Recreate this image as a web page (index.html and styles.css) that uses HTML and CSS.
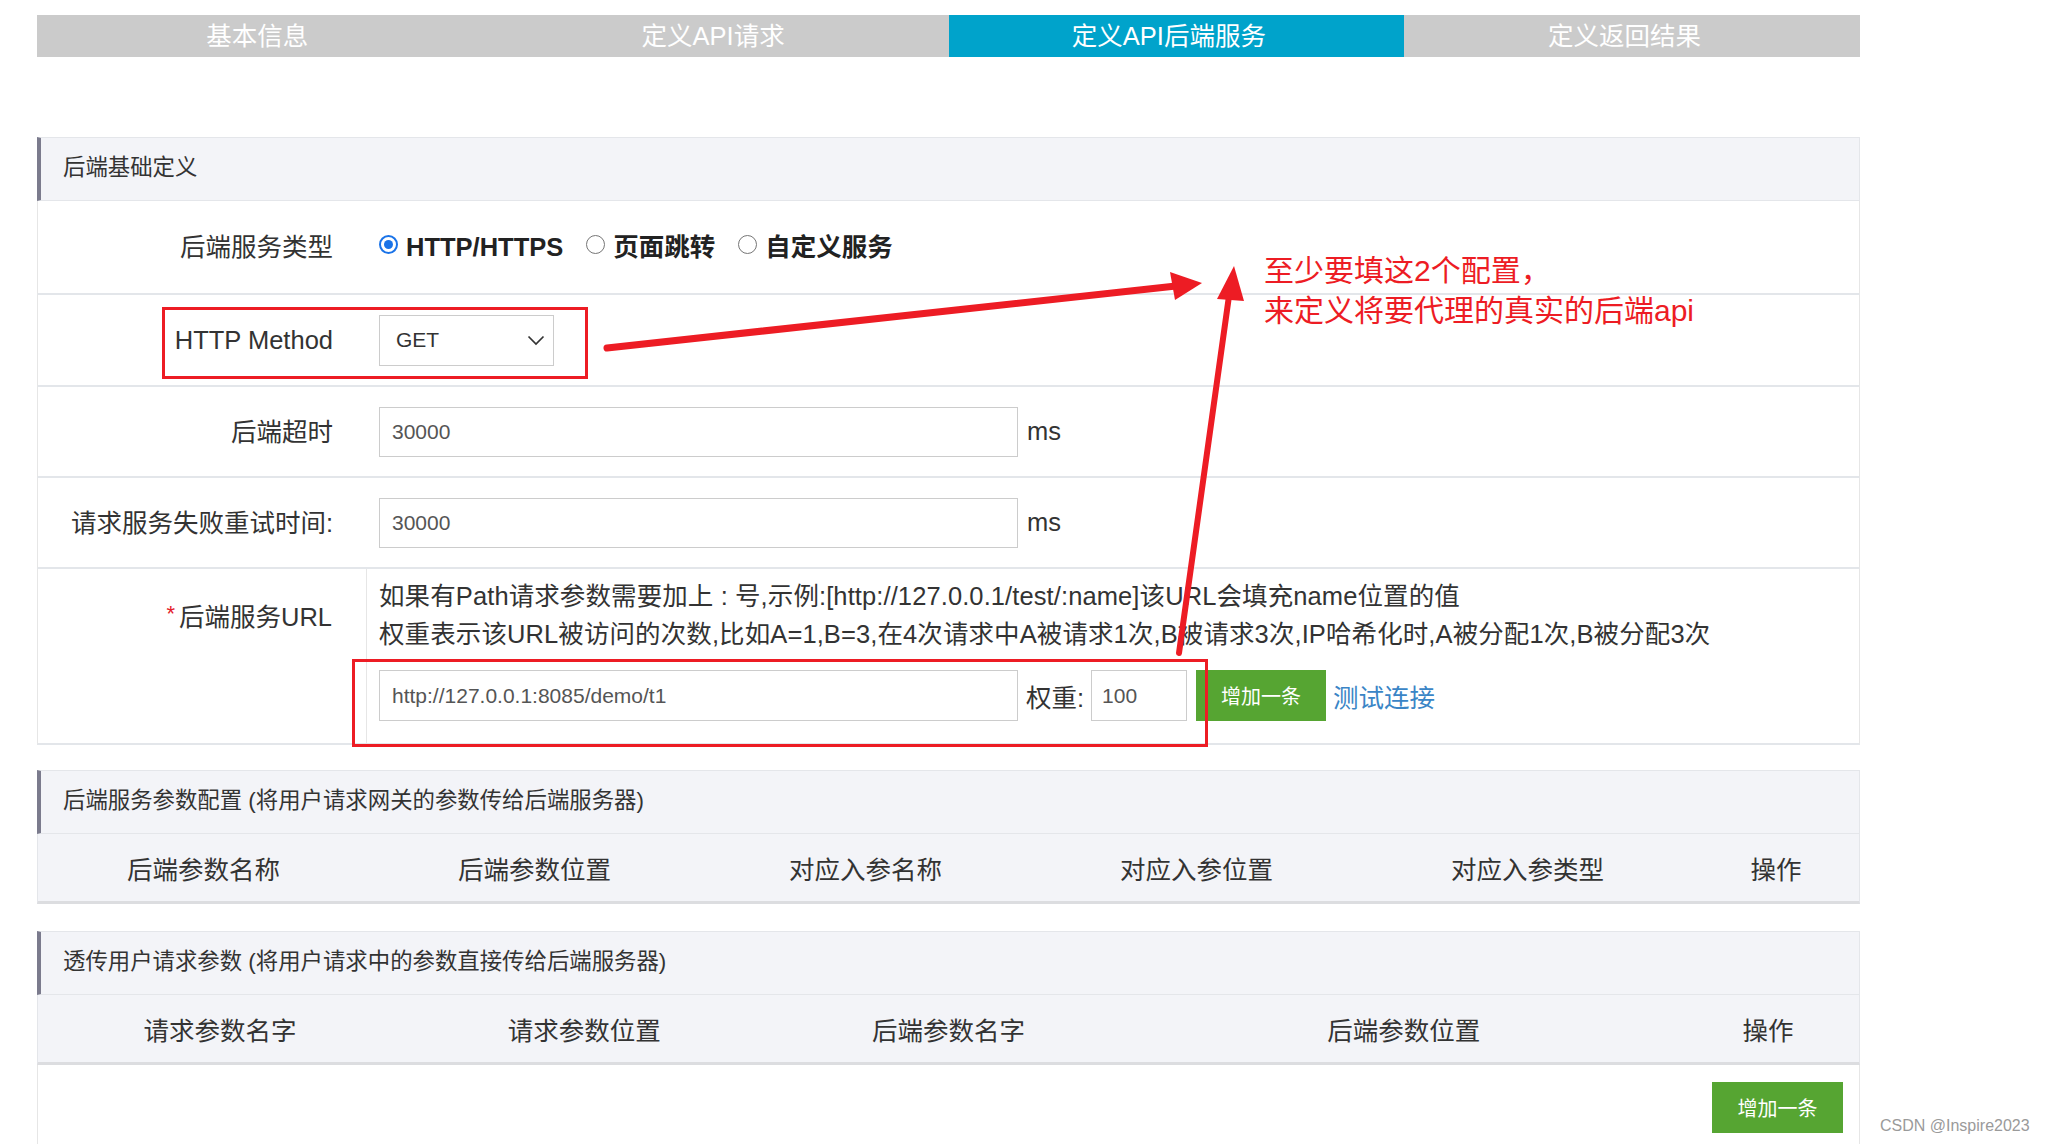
FILE: index.html
```html
<!DOCTYPE html>
<html lang="zh-CN">
<head>
<meta charset="utf-8">
<title>定义API后端服务</title>
<link rel="stylesheet" href="styles.css">
</head>
<body>
<div class="main">
  <div class="tabs">
    <div class="tab">基本信息</div>
    <div class="tab">定义API请求</div>
    <div class="tab active">定义API后端服务</div>
    <div class="tab">定义返回结果</div>
  </div>

  <section class="panel panel-basic">
    <div class="panel-title">后端基础定义</div>

    <div class="form-row row-type">
      <div class="form-label">后端服务类型</div>
      <div class="form-ctrl">
        <label class="radio checked"><span class="dot"></span><span class="radio-text">HTTP/HTTPS</span></label>
        <label class="radio"><span class="dot"></span><span class="radio-text">页面跳转</span></label>
        <label class="radio"><span class="dot"></span><span class="radio-text">自定义服务</span></label>
      </div>
    </div>

    <div class="form-row row-method">
      <div class="form-label">HTTP Method</div>
      <div class="form-ctrl">
        <div class="select">
          <span>GET</span>
          <svg class="chev" width="18" height="11" viewBox="0 0 18 11"><polyline points="1.5,1.5 9,9 16.5,1.5" fill="none" stroke="#333" stroke-width="1.7"/></svg>
        </div>
      </div>
    </div>

    <div class="form-row row-timeout">
      <div class="form-label">后端超时</div>
      <div class="form-ctrl">
        <input class="text-input" type="text" value="30000">
        <span class="unit">ms</span>
      </div>
    </div>

    <div class="form-row row-retry">
      <div class="form-label">请求服务失败重试时间:</div>
      <div class="form-ctrl">
        <input class="text-input" type="text" value="30000">
        <span class="unit">ms</span>
      </div>
    </div>

    <div class="form-row row-url">
      <div class="form-label label-top"><span class="req">*</span>后端服务URL</div>
      <div class="url-ctrl">
        <div class="help">如果有Path请求参数需要加上 : 号,示例:[http://127.0.0.1/test/:name]该URL会填充name位置的值</div>
        <div class="help">权重表示该URL被访问的次数,比如A=1,B=3,在4次请求中A被请求1次,B被请求3次,IP哈希化时,A被分配1次,B被分配3次</div>
        <div class="url-line">
          <input class="text-input url-input" type="text" value="http://127.0.0.1:8085/demo/t1">
          <span class="weight-label">权重:</span>
          <input class="text-input weight-input" type="text" value="100">
          <span class="btn-green">增加一条</span>
          <span class="link">测试连接</span>
        </div>
      </div>
    </div>
  </section>

  <section class="panel panel-params">
    <div class="panel-title">后端服务参数配置 (将用户请求网关的参数传给后端服务器)</div>
    <div class="thead cols-6">
      <div>后端参数名称</div>
      <div>后端参数位置</div>
      <div>对应入参名称</div>
      <div>对应入参位置</div>
      <div>对应入参类型</div>
      <div>操作</div>
    </div>
  </section>

  <section class="panel panel-pass">
    <div class="panel-title">透传用户请求参数 (将用户请求中的参数直接传给后端服务器)</div>
    <div class="thead cols-5">
      <div>请求参数名字</div>
      <div>请求参数位置</div>
      <div>后端参数名字</div>
      <div>后端参数位置</div>
      <div>操作</div>
    </div>
    <div class="tbody">
      <span class="btn-green btn-add">增加一条</span>
    </div>
  </section>
</div>

<div class="red-box box-method"></div>
<div class="red-box box-url"></div>
<svg class="arrows" width="2047" height="1144" viewBox="0 0 2047 1144">
  <line x1="607" y1="348" x2="1176" y2="286" stroke="#ed1c24" stroke-width="7" stroke-linecap="round"/>
  <polygon points="1202,283 1170,272 1175,300" fill="#ed1c24"/>
  <line x1="1179" y1="653" x2="1229" y2="296" stroke="#ed1c24" stroke-width="6" stroke-linecap="round"/>
  <polygon points="1234,266 1217,299 1244,301" fill="#ed1c24"/>
</svg>
<div class="note">至少要填这2个配置，<br>来定义将要代理的真实的后端api</div>
<div class="watermark">CSDN @Inspire2023</div>
</body>
</html>
```

FILE: styles.css
```css
* { box-sizing: border-box; }

html, body {
  margin: 0;
  padding: 0;
  background: #fff;
}

body {
  position: relative;
  width: 2047px;
  height: 1144px;
  overflow: hidden;
  font-family: "Liberation Sans", "Noto Sans CJK SC", sans-serif;
  color: #333;
}

.main {
  margin-left: 37px;
  width: 1823px;
  padding-top: 15px;
}

/* tabs */
.tabs {
  display: grid;
  grid-template-columns: repeat(4, 1fr);
  height: 42px;
  background: #cbcbcb;
}
.tab {
  color: #fff;
  font-size: 25.5px;
  line-height: 42px;
  text-align: center;
  padding-right: 15px;
}
.tab.active { background: #00a3cb; }

/* panels */
.panel-basic { margin-top: 80px; }
.panel-params { margin-top: 25px; }
.panel-pass { margin-top: 27px; }

.panel-title {
  height: 64px;
  background: #f3f4f8;
  border: 1px solid #e4e6ea;
  border-left: 4px solid #7b7b8d;
  padding-left: 22px;
  font-size: 22.4px;
  line-height: 60px;
  color: #333;
  white-space: nowrap;
}

/* form rows */
.form-row {
  display: flex;
  border-left: 1px solid #e6e6e6;
  border-right: 1px solid #e6e6e6;
  border-bottom: 2px solid #e3e6ea;
}
.row-type { height: 94px; }
.row-method { height: 92px; }
.row-timeout { height: 91px; }
.row-retry { height: 91px; }

.form-label {
  width: 329px;
  flex: none;
  display: flex;
  align-items: center;
  justify-content: flex-end;
  padding-right: 34px;
  font-size: 25.5px;
  line-height: 36px;
  color: #333;
  white-space: nowrap;
}
.label-top {
  align-items: flex-start;
  padding-top: 30px;
  border-right: 1px solid #e6e6e6;
}
.req {
  color: #e4202a;
  font-size: 22px;
  margin-right: 4px;
  align-self: flex-start;
  line-height: 30px;
}

.form-ctrl {
  flex: 1;
  display: flex;
  align-items: center;
  padding-left: 12px;
}

/* radios */
.radio {
  display: flex;
  align-items: center;
  margin-right: 23px;
}
.radio .dot {
  position: relative;
  width: 19px;
  height: 19px;
  border: 1px solid #767676;
  border-radius: 50%;
  margin-right: 8px;
  top: -3px;
  flex: none;
}
.radio.checked .dot { border: 2px solid #1a73e8; }
.radio.checked .dot::after {
  content: "";
  position: absolute;
  left: 3px;
  top: 3px;
  width: 9px;
  height: 9px;
  border-radius: 50%;
  background: #1a73e8;
}
.radio-text {
  font-size: 25.5px;
  line-height: 36px;
  height: 36px;
  font-weight: bold;
  color: #222;
}

/* select */
.select {
  width: 175px;
  height: 51px;
  border: 1px solid #ccc;
  display: flex;
  align-items: center;
  justify-content: space-between;
  padding: 0 8px 0 16px;
  font-size: 21px;
  color: #333;
}
.chev { display: block; }

/* inputs */
.text-input {
  width: 639px;
  height: 50px;
  border: 1px solid #ccc;
  padding: 0 12px;
  font-family: "Liberation Sans", "Noto Sans CJK SC", sans-serif;
  font-size: 21px;
  color: #555;
  background: #fff;
  outline: none;
  margin: 0;
}
.unit {
  font-size: 25.5px;
  margin-left: 9px;
  color: #333;
}

/* url row */
.url-ctrl {
  flex: 1;
  padding: 8px 0 22px 12px;
}
.help {
  font-size: 25.5px;
  line-height: 38px;
  color: #333;
  white-space: nowrap;
  letter-spacing: 0.1px;
}
.url-line {
  display: flex;
  align-items: center;
  margin-top: 17px;
  height: 51px;
}
.url-input { height: 51px; }
.weight-label {
  margin-left: 8px;
  font-size: 25.5px;
  color: #333;
}
.weight-input {
  width: 96px;
  height: 51px;
  margin-left: 7px;
  padding-left: 10px;
}
.btn-green {
  width: 130px;
  height: 51px;
  flex: none;
  background: #56a532;
  color: #fff;
  font-size: 20px;
  margin-left: 9px;
  display: flex;
  align-items: center;
  justify-content: center;
}
.link {
  color: #3a85c6;
  font-size: 25.5px;
  margin-left: 7px;
}

/* table heads */
.thead {
  display: grid;
  height: 70px;
  background: #f3f4f8;
  border-left: 1px solid #e4e6ea;
  border-right: 1px solid #e4e6ea;
  border-bottom: 3px solid #dcdde0;
  align-items: center;
  text-align: center;
  font-size: 25.5px;
  color: #333;
}
.cols-6 { grid-template-columns: repeat(5, 331px) 1fr; }
.cols-5 { grid-template-columns: 20% 20% 20% 30% 10%; }

.tbody {
  height: 79px;
  border-left: 1px solid #e6e6e6;
  border-right: 1px solid #e6e6e6;
  display: flex;
  justify-content: flex-end;
  align-items: flex-start;
  padding: 17px 16px 0 0;
}
.btn-add { width: 131px; margin-left: 0; }

/* annotations */
.red-box {
  position: absolute;
  border: 3px solid #ed1c24;
}
.box-method { left: 162px; top: 307px; width: 426px; height: 72px; }
.box-url { left: 352px; top: 659px; width: 856px; height: 88px; }

.arrows {
  position: absolute;
  left: 0;
  top: 0;
  pointer-events: none;
}

.note {
  position: absolute;
  left: 1264px;
  top: 251px;
  color: #ed1c24;
  font-size: 30px;
  line-height: 40px;
  white-space: nowrap;
}

.watermark {
  position: absolute;
  left: 1880px;
  top: 1117px;
  font-size: 16px;
  color: #9a9a9a;
  white-space: nowrap;
}
```
